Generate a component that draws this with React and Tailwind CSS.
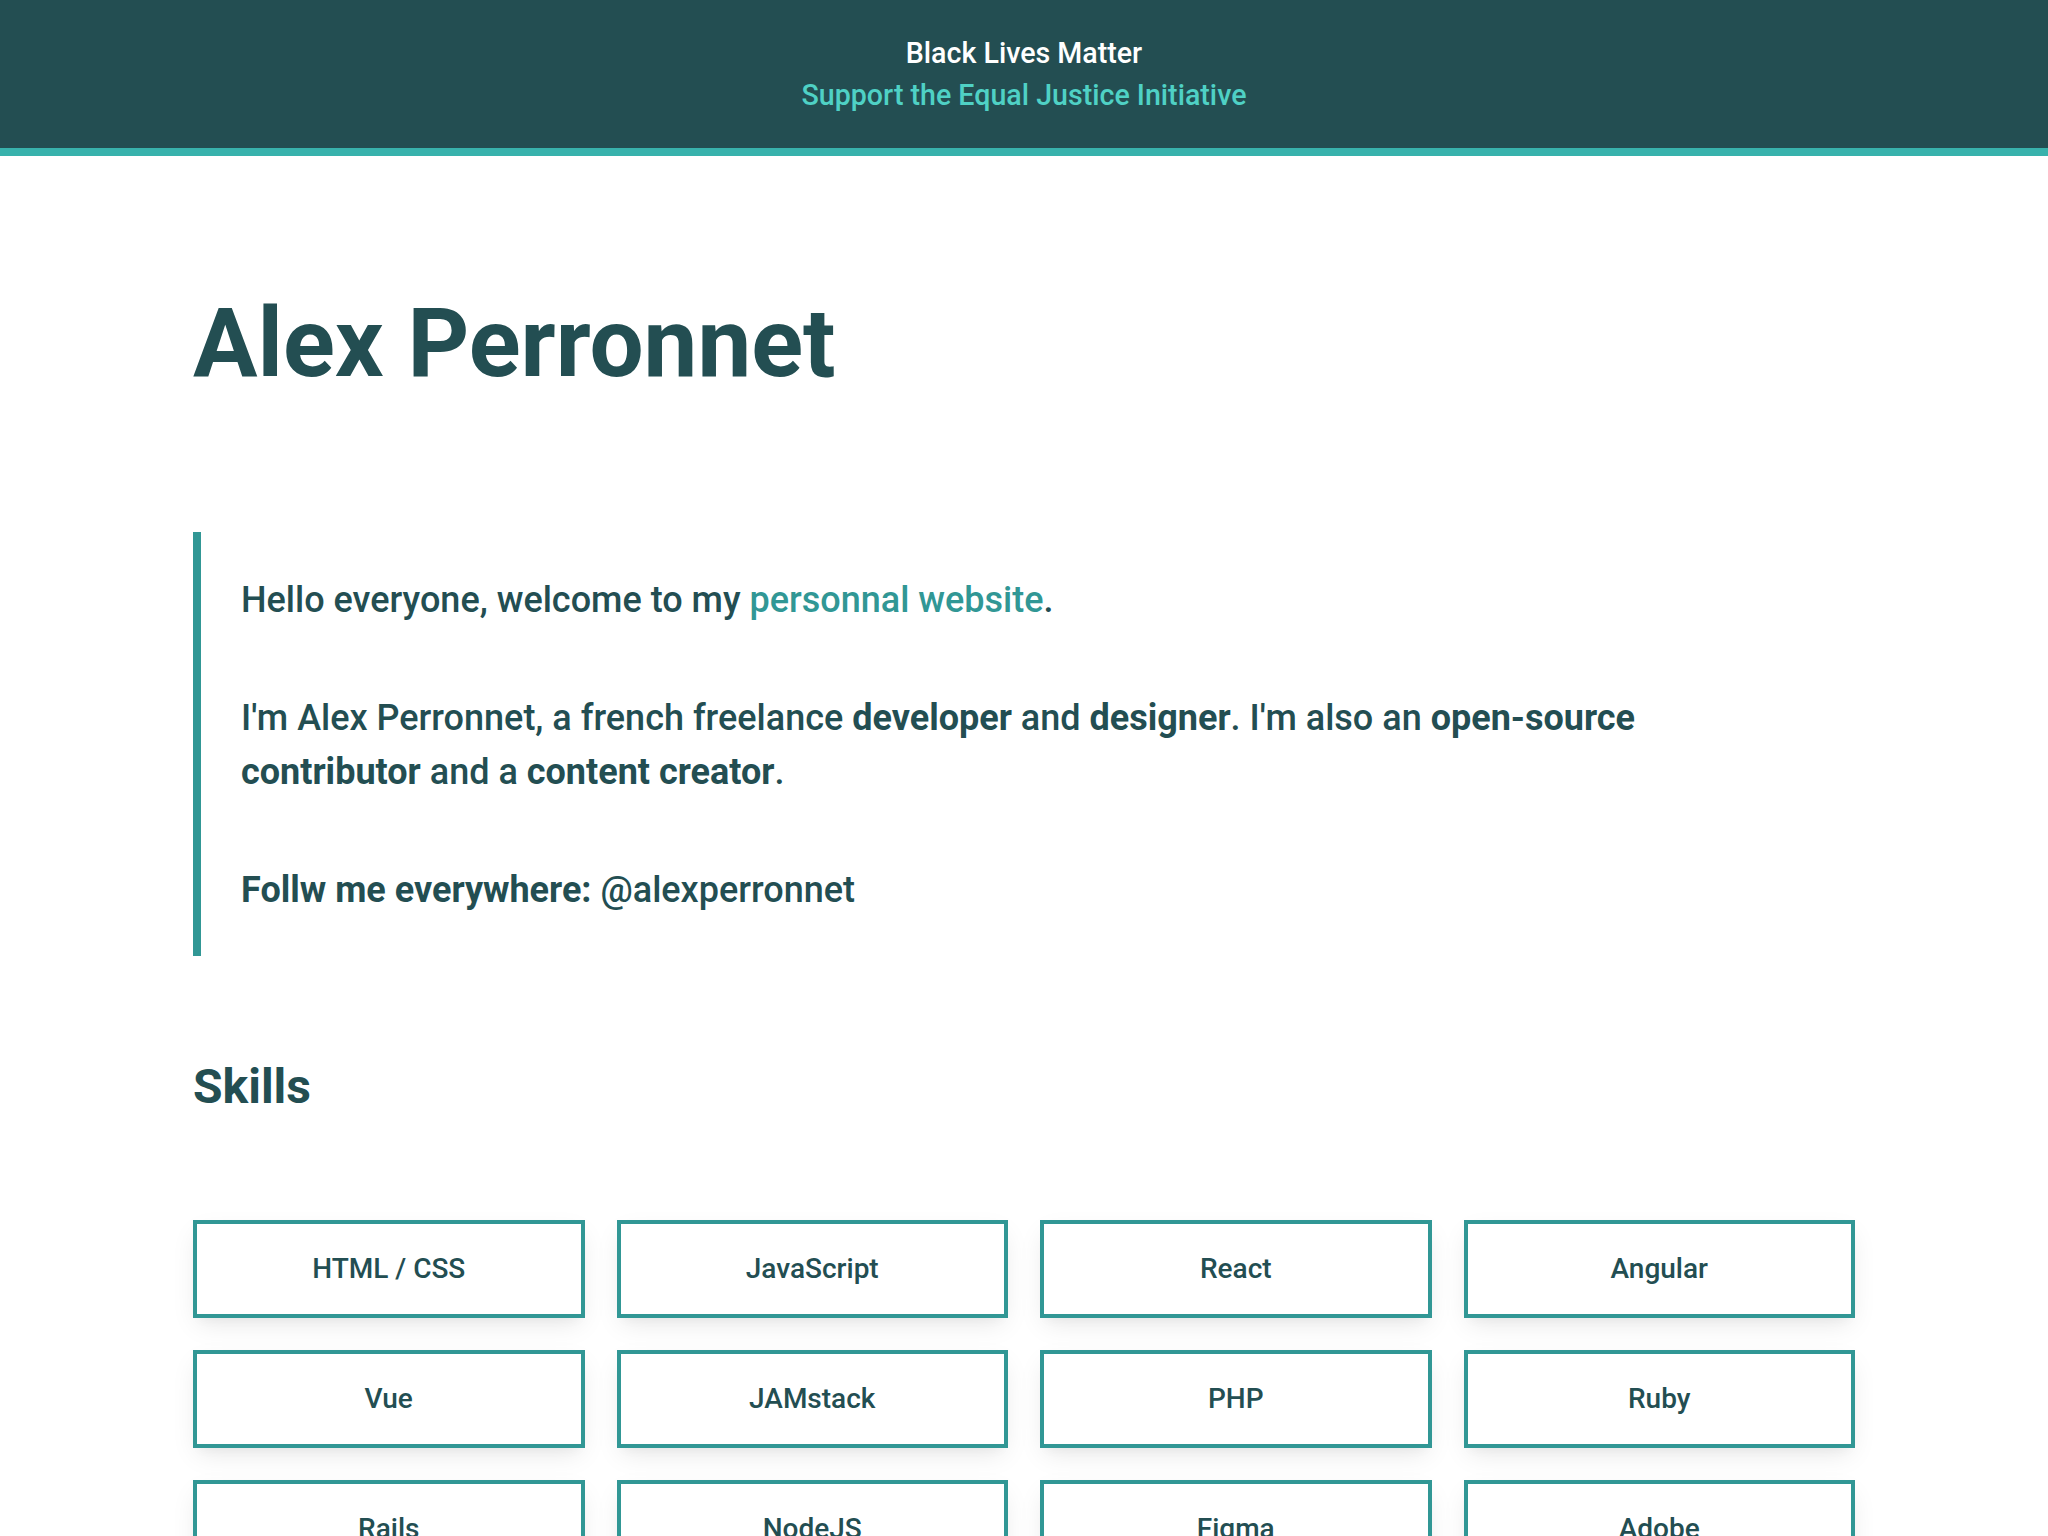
const skills = [
  "HTML / CSS",
  "JavaScript",
  "React",
  "Angular",
  "Vue",
  "JAMstack",
  "PHP",
  "Ruby",
  "Rails",
  "NodeJS",
  "Figma",
  "Adobe",
];

export default function App() {
  return (
    <div className="min-h-screen bg-white text-[#234e52] font-['Roboto',sans-serif]">
      <header className="bg-[#234e52] border-b-8 border-[#38b2ac] py-8 text-center text-[28.6px] leading-[42px] font-medium">
        <p className="text-white">Black Lives Matter</p>
        <a href="#" className="block text-[#4fd1c5]">
          Support the Equal Justice Initiative
        </a>
      </header>

      <main className="max-w-[1662px] mx-auto">
        <h1 className="mt-[139px] text-[96px] leading-none font-bold">
          Alex Perronnet
        </h1>

        <blockquote className="mt-[141px] border-l-8 border-[#319795] pl-10 pt-[41px] pb-[39px] text-[36px] leading-[1.5] font-medium">
          <p>
            Hello everyone, welcome to my{" "}
            <a href="#" className="text-[#319795]">
              personnal website
            </a>
            .
          </p>
          <p className="mt-16 max-w-[1480px]">
            I'm Alex Perronnet, a french freelance <strong className="font-bold">developer</strong> and{" "}
            <strong className="font-bold">designer</strong>. I'm also an{" "}
            <strong className="font-bold">open-source contributor</strong> and a{" "}
            <strong className="font-bold">content creator</strong>.
          </p>
          <p className="mt-16">
            <strong className="font-bold">Follw me everywhere:</strong> @alexperronnet
          </p>
        </blockquote>

        <h2 className="mt-[107px] text-[48px] leading-none font-bold">Skills</h2>

        <div className="mt-[109px] grid grid-cols-4 gap-8 pb-16">
          {skills.map((s) => (
            <div
              key={s}
              className="border-4 border-[#319795] bg-white py-6 text-center text-[28px] leading-[1.5] font-medium shadow-[0_10px_25px_-5px_rgba(0,0,0,0.1),0_8px_10px_-6px_rgba(0,0,0,0.04)]"
            >
              {s}
            </div>
          ))}
        </div>
      </main>
    </div>
  );
}
